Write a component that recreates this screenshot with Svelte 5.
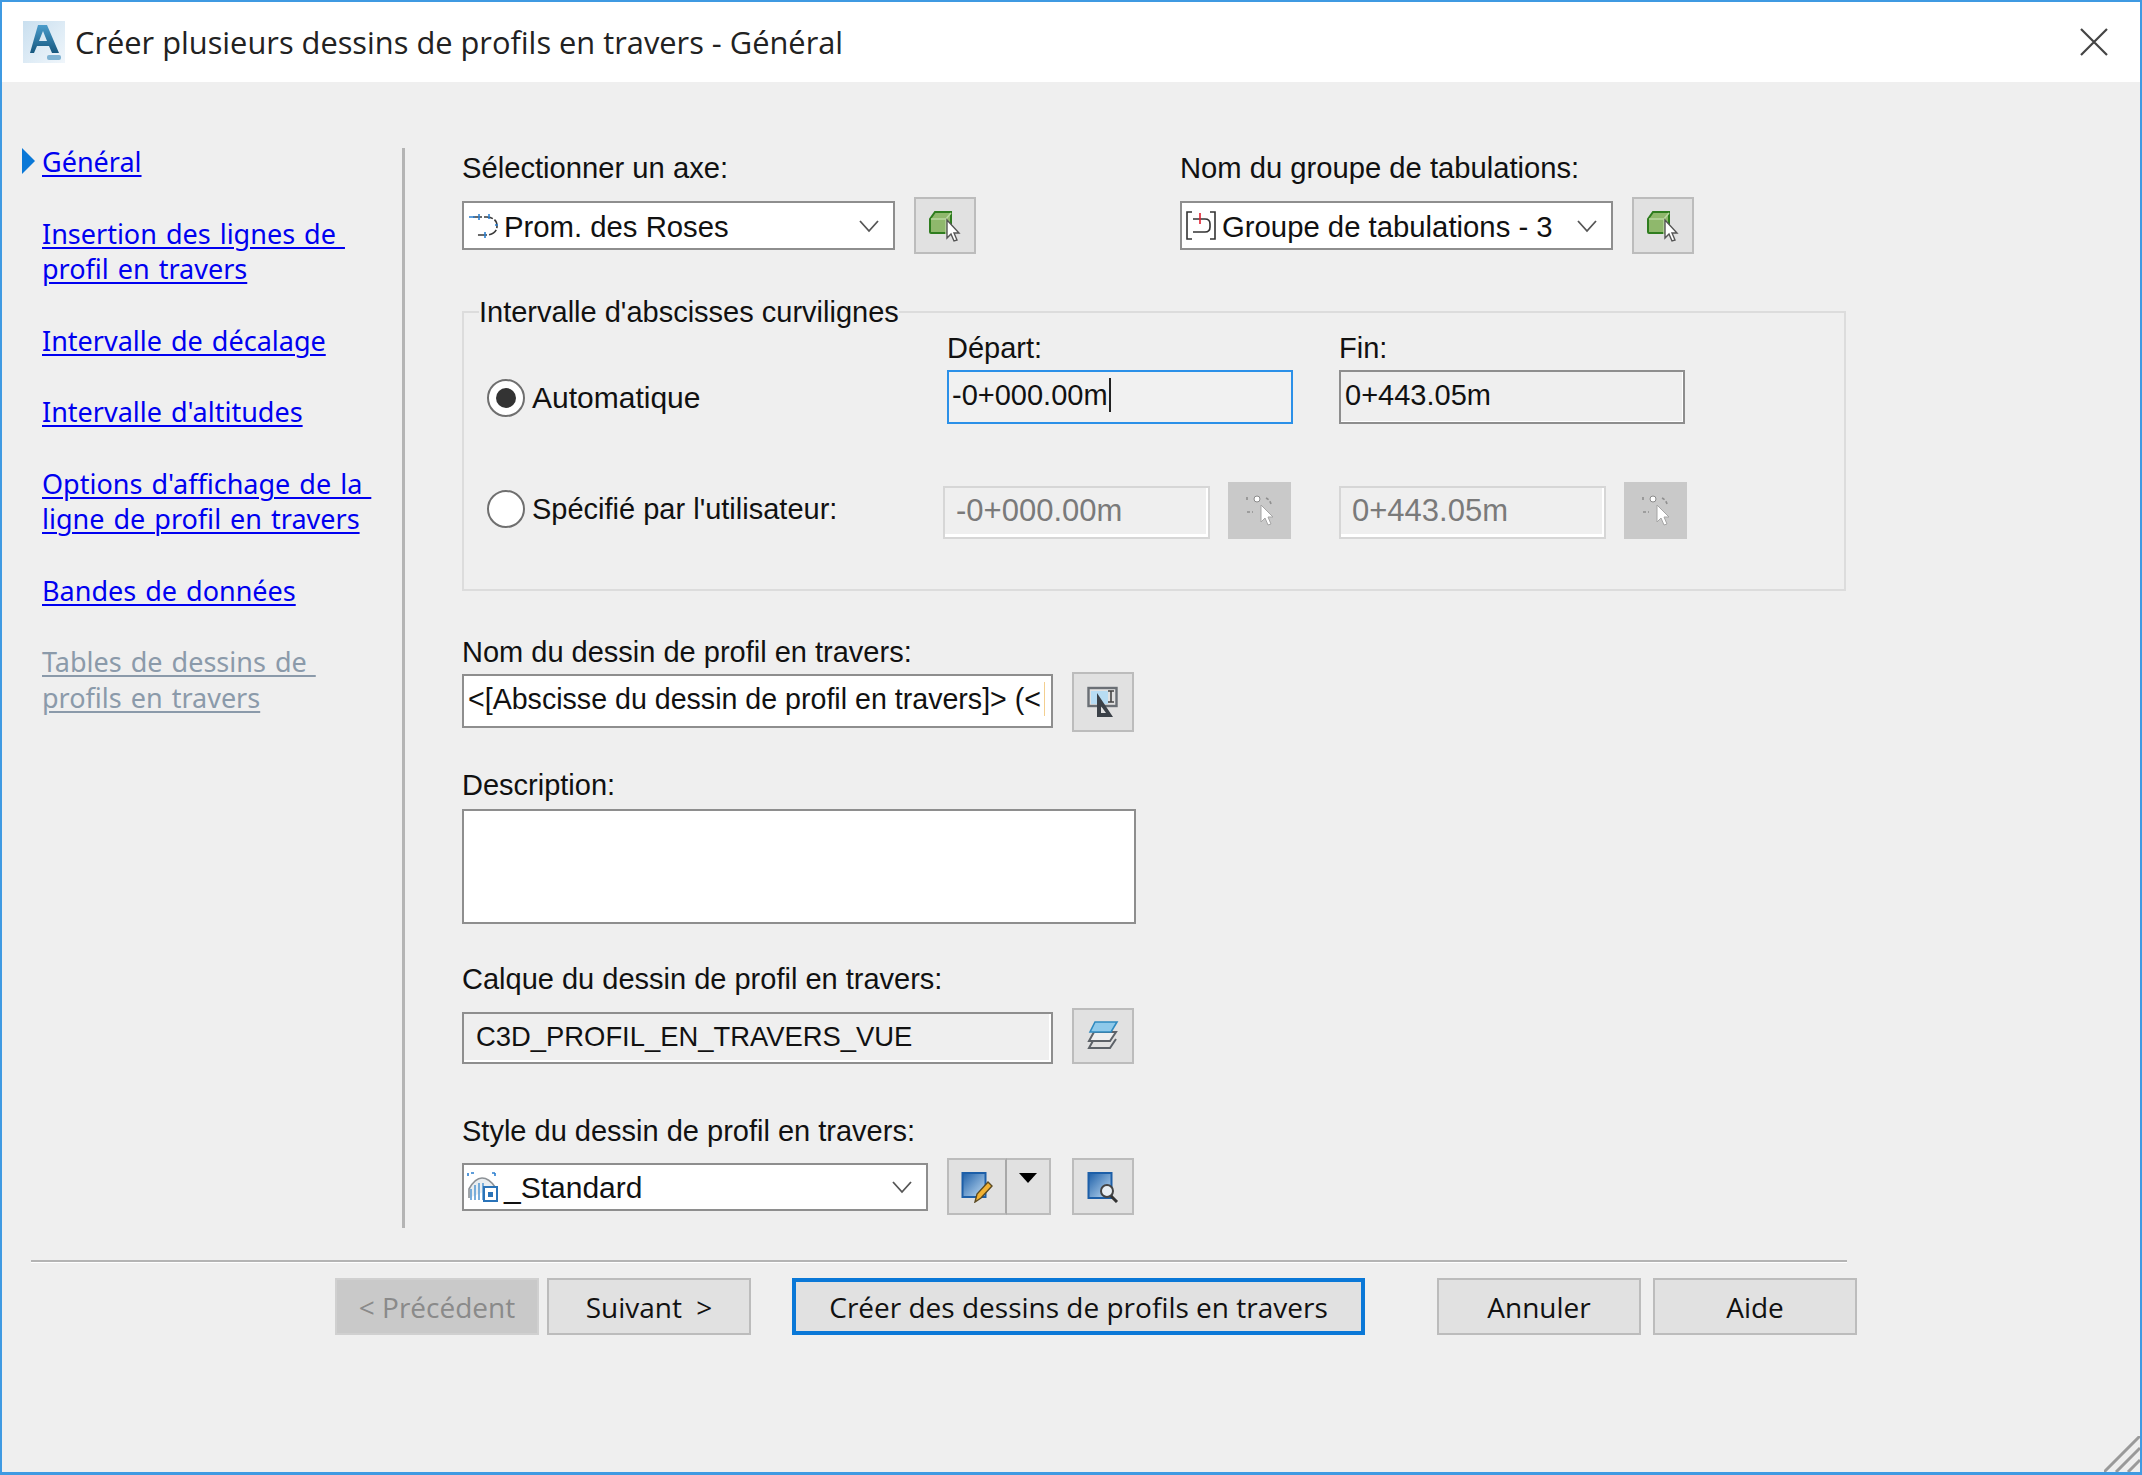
<script>
  const links = [
    { lines: ['Général'], active: true },
    { lines: ['Insertion des lignes de ', 'profil en travers'] },
    { lines: ['Intervalle de décalage'] },
    { lines: ["Intervalle d'altitudes"] },
    { lines: ["Options d'affichage de la ", 'ligne de profil en travers'] },
    { lines: ['Bandes de données'] },
    { lines: ['Tables de dessins de ', 'profils en travers'], disabled: true }
  ];
</script>

{#snippet chevron()}
  <svg class="chev" width="22" height="14" viewBox="0 0 22 14"><path d="M2 2l9 10 9-10" fill="none" stroke="#555" stroke-width="1.8"/></svg>
{/snippet}

{#snippet pick()}
  <svg width="32" height="32" viewBox="0 0 32 32">
    <path d="M1 9l5-7h16v21H2a1 1 0 0 1-1-1z" fill="#8fb86c" stroke="#2f7d1f" stroke-width="2"/>
    <path d="M2 9h15v15M17 9l5-6" fill="none" stroke="#b9d6a0" stroke-width="1.5"/>
    <path d="M18 10v18l4-4 3 7 3-1-3-7h5z" fill="#fff" stroke="#555" stroke-width="1.4"/>
  </svg>
{/snippet}

{#snippet pickOff()}
  <svg width="32" height="32" viewBox="0 0 32 32">
    <circle cx="13" cy="4" r="3" fill="#fff" stroke="#8a8a8a"/>
    <path d="M3 2v4M22 3q4 2 5 6M3 17h6" fill="none" stroke="#8f8f8f" stroke-width="1.6" stroke-dasharray="3 2"/>
    <path d="M17 10v17l4-4 3 7 3-1-3-7h5z" fill="#fff" stroke="#a5a5a5"/>
  </svg>
{/snippet}

<div class="window">
  <header class="titlebar">
    <svg class="logo" width="42" height="42" viewBox="0 0 42 42">
      <defs>
        <linearGradient id="lg" x1="0" y1="0" x2="1" y2="1"><stop offset="0" stop-color="#c9dfef"/><stop offset="1" stop-color="#f0f6fb"/></linearGradient>
        <linearGradient id="la" x1="0" y1="0" x2="0" y2="1"><stop offset="0" stop-color="#4a9ccb"/><stop offset="1" stop-color="#17587f"/></linearGradient>
      </defs>
      <rect width="42" height="42" fill="url(#lg)"/>
      <path d="M15 4h9l12 28h-7l-3-7H14l-3 7H7zM16 20h8l-4-10z" fill="url(#la)" fill-rule="evenodd"/>
      <rect x="24" y="34" width="14" height="5" rx="2" fill="#7fb3d3"/>
    </svg>
    <span class="title">Créer plusieurs dessins de profils en travers - Général</span>
    <svg class="close" width="30" height="30" viewBox="0 0 30 30"><path d="M2 2l26 26M28 2L2 28" stroke="#444" stroke-width="2.2"/></svg>
  </header>

  <div class="content">
    <nav class="sidebar">
      {#each links as link}
        <div class="link" class:disabled={link.disabled}>
          {#if link.active}<span class="marker"></span>{/if}
          {#each link.lines as line}<div class="line"><u>{line}</u></div>{/each}
        </div>
      {/each}
    </nav>

    <main class="main">
      <div class="toprow">
        <div class="topcol left">
          <div class="label">Sélectionner un axe:</div>
          <div class="row top">
            <div class="select w433">
              <svg class="sicon" width="32" height="26" viewBox="0 0 32 26"><path d="M6 4h14q10 1 10 9t-10 9H10" fill="none" stroke="#3a3a3a" stroke-width="1.6" stroke-dasharray="9 2"/><path d="M2 4h6M12 1v6M22 1v5M28 12h3M18 19v6" stroke="#2b7fd0" stroke-width="1.6"/></svg>
              <span class="stext">Prom. des Roses</span>
              {@render chevron()}
            </div>
            <button class="iconbtn pickbtn">{@render pick()}</button>
          </div>
        </div>
        <div class="topcol">
          <div class="label">Nom du groupe de tabulations:</div>
          <div class="row top">
            <div class="select w433">
              <svg class="sicon" width="32" height="32" viewBox="0 0 32 32"><path d="M7 2H2v27h5M25 2h5v27h-5" fill="none" stroke="#333" stroke-width="1.6"/><path d="M8 9h12q5 0 5 5v3q0 5-5 5H8" fill="none" stroke="#333" stroke-width="1.6"/><path d="M15 3v11" stroke="#e02030" stroke-width="1.6"/></svg>
              <span class="stext">Groupe de tabulations - 3</span>
              {@render chevron()}
            </div>
            <button class="iconbtn pickbtn b2">{@render pick()}</button>
          </div>
        </div>
      </div>

      <fieldset class="group">
        <legend>Intervalle d'abscisses curvilignes</legend>
        <div class="auto">
          <div class="radiowrap w460 first">
            <span class="radio on"></span><span>Automatique</span>
          </div>
          <div class="col">
            <div class="label small">Départ:</div>
            <div class="input focus"><span>-0+000.00m</span><span class="caret"></span></div>
          </div>
          <div class="col fin">
            <div class="label small">Fin:</div>
            <div class="input readonly"><span>0+443.05m</span></div>
          </div>
        </div>
        <div class="spec">
          <div class="radiowrap w456">
            <span class="radio"></span><span>Spécifié par l'utilisateur:</span>
          </div>
          <div class="input off">-0+000.00m</div>
          <button class="iconbtn offbtn">{@render pickOff()}</button>
          <div class="input off second">0+443.05m</div>
          <button class="iconbtn offbtn">{@render pickOff()}</button>
        </div>
      </fieldset>

      <div class="label m44">Nom du dessin de profil en travers:</div>
      <div class="row namerow">
        <div class="input name"><span>&lt;[Abscisse du dessin de profil en travers]&gt; (&lt;</span><span class="clipmark"></span></div>
        <button class="iconbtn namebtn">
          <svg width="32" height="32" viewBox="0 0 32 32">
            <rect x="1.5" y="2" width="28" height="18" fill="none" stroke="#6a6f75" stroke-width="2.4"/>
            <rect x="4" y="5" width="17" height="13" fill="#b7dcf3"/>
            <path d="M21 5h6M24 5v11M21 16h6" stroke="#444" stroke-width="1.6"/>
            <path d="M10 7l16 24H10z M14 20v7h5z" fill="#3b4148" fill-rule="evenodd"/>
          </svg>
        </button>
      </div>

      <div class="label m36">Description:</div>
      <div class="textarea"></div>

      <div class="label m38">Calque du dessin de profil en travers:</div>
      <div class="row layerrow">
        <div class="input layer">C3D_PROFIL_EN_TRAVERS_VUE</div>
        <button class="iconbtn layerbtn">
          <svg width="32" height="30" viewBox="0 0 32 30">
            <path d="M7 18L2 27h21l6-9" fill="none" stroke="#5d6268" stroke-width="2"/>
            <path d="M7 11L2 20h21l6-9z" fill="#efefef" stroke="#5d6268" stroke-width="2"/>
            <path d="M8 1L3 11h21l6-10z" fill="#8ec9ea" stroke="#2f8ac0" stroke-width="1.6"/>
          </svg>
        </button>
      </div>

      <div class="label m50">Style du dessin de profil en travers:</div>
      <div class="row stylerow">
        <div class="select w466">
          <svg class="sicon" width="32" height="30" viewBox="0 0 32 30">
            <path d="M1 1v3M4 1h3M25 1h3M28 1v3" stroke="#2b7fd0" stroke-width="1.6"/>
            <path d="M2 26V17Q8 6 15 6t13 9" fill="#e9edf0" stroke="#8c9196" stroke-width="1.6"/>
            <path d="M4 17v11M8 13v15M12 11v17M16 11v17" stroke="#5a9bd4" stroke-width="1.6"/>
            <rect x="17" y="15" width="13" height="14" fill="#fff" stroke="#2a73b8" stroke-width="2"/>
            <rect x="21" y="20" width="5" height="5" fill="#2a73b8"/>
          </svg>
          <span class="stext">_Standard</span>
          {@render chevron()}
        </div>
        <div class="split">
          <button class="part a">
            <svg width="32" height="32" viewBox="0 0 32 32">
              <defs><linearGradient id="doc" x1="0" y1="0" x2="1" y2="1"><stop offset="0" stop-color="#1d5fa8"/><stop offset="1" stop-color="#c4dff5"/></linearGradient></defs>
              <rect x="1.5" y="2" width="23" height="24" fill="url(#doc)" stroke="#1d5fa8" stroke-width="2"/>
              <path d="M14 31l2-8L27 11l4 4-11 12z" fill="#f2b233" stroke="#5b4a22" stroke-width="1.4"/>
            </svg>
          </button>
          <button class="part b"><span class="tri"></span></button>
        </div>
        <button class="iconbtn stylebtn">
          <svg width="32" height="32" viewBox="0 0 32 32">
            <defs><linearGradient id="doc2" x1="0" y1="0" x2="1" y2="1"><stop offset="0" stop-color="#1d5fa8"/><stop offset="1" stop-color="#c4dff5"/></linearGradient></defs>
            <rect x="1.5" y="2" width="23" height="25" fill="url(#doc2)" stroke="#1d5fa8" stroke-width="2"/>
            <circle cx="20" cy="20" r="6" fill="#e8eef3" stroke="#444" stroke-width="2"/>
            <path d="M24 25l6 6" stroke="#333" stroke-width="3"/>
          </svg>
        </button>
      </div>
    </main>
  </div>

  <div class="separator"></div>

  <footer class="footer">
    <button class="btn prev">&lt; Précédent</button>
    <button class="btn next">Suivant &gt;</button>
    <button class="btn create">Créer des dessins de profils en travers</button>
    <button class="btn cancel">Annuler</button>
    <button class="btn help">Aide</button>
  </footer>

  <svg class="grip" width="36" height="36" viewBox="0 0 36 36"><path d="M0 36L36 0M12 36L36 12M24 36L36 24" stroke="#9a9a9a" stroke-width="3"/></svg>
</div>

<style>
  :global(body) { margin: 0; background: #efefef; }
  .window {
    position: relative;
    box-sizing: border-box;
    width: 2142px;
    height: 1475px;
    border: 2px solid #3f9ae2;
    border-bottom-width: 3px;
    background: #efefef;
    font-family: "Liberation Sans", Arial, sans-serif;
    font-size: 29px;
    color: #111;
    overflow: hidden;
  }
  .titlebar {
    display: flex;
    align-items: center;
    height: 80px;
    background: #fff;
    padding: 0 31px 0 21px;
  }
  .logo { flex: none; }
  .title {
    margin-left: 10px;
    font-family: "Open Sans", sans-serif;
    font-size: 30.8px;
    color: #222;
    flex: 1;
  }
  .close { flex: none; }

  .content { display: flex; padding-top: 66px; }
  .sidebar {
    box-sizing: border-box;
    width: 403px;
    border-right: 3px solid #b4b4b4;
    display: flex;
    flex-direction: column;
    gap: 36px;
    padding-left: 40px;
    font-family: "Noto Sans", sans-serif;
    font-size: 27px;
    word-spacing: 2px;
    line-height: 35.5px;
    color: #0000f0;
  }
  .link { position: relative; }
  .link:first-child { margin-top: -4px; }
  .line { white-space: pre; }
  .link.disabled { color: #8b9aaa; }
  .line u { text-underline-offset: 3px; text-decoration-thickness: 2px; }
  .marker {
    position: absolute;
    left: -20px;
    top: 4px;
    border-left: 13px solid #0a78d7;
    border-top: 13px solid transparent;
    border-bottom: 13px solid transparent;
  }
  .main { margin-left: 57px; padding-top: 2px; padding-bottom: 13px; width: 1400px; }

  .label { line-height: 34px; height: 34px; white-space: nowrap; }
  .row { display: flex; align-items: center; }
  .toprow { display: flex; }
  .toprow .label { font-size: 29.2px; padding-top: 1px; margin-bottom: -1px; }
  .topcol.left { width: 718px; }
  .row.top { margin-top: 13px; height: 57px; }

  .select {
    box-sizing: border-box;
    display: flex;
    align-items: center;
    height: 49px;
    background: #fff;
    border: 2px solid #8e8e8e;
    padding: 0 13px 0 3px;
  }
  .w433 { width: 433px; }
  .w466 { width: 466px; }
  .sicon { flex: none; }
  .stext { flex: 1; margin-left: 5px; white-space: nowrap; font-size: 29.3px; padding-top: 2px; }
  .chev { flex: none; }

  .iconbtn {
    box-sizing: border-box;
    display: flex;
    align-items: center;
    justify-content: center;
    width: 62px;
    height: 57px;
    padding: 0;
    background: #e1e1e1;
    border: 2px solid #bcbcbc;
  }
  .pickbtn { margin-left: 19px; }
  .pickbtn.b2 { margin-left: 19px; }

  .group {
    box-sizing: border-box;
    margin: 41px 0 0;
    padding: 0 0 0 23px;
    width: 1384px;
    height: 296px;
    border: 2px solid #dcdcdc;
    min-width: 0;
  }
  legend { padding: 0; margin-left: -8px; line-height: 34px; white-space: nowrap; font-size: 29px; }
  .auto { display: flex; align-items: flex-end; }
  .col { width: 346px; }
  .col.fin { margin-left: 46px; }
  .label.small { height: 36px; line-height: 38px; margin-bottom: 5px; }
  .radiowrap { display: flex; align-items: center; gap: 7px; height: 54px; white-space: nowrap; flex: none; box-sizing: border-box; }
  .radiowrap.first { padding-top: 2px; font-size: 30px; }
  .w460 { width: 460px; }
  .w456 { width: 456px; }
  .radio {
    box-sizing: border-box;
    flex: none;
    width: 38px;
    height: 38px;
    border-radius: 50%;
    background: #fff;
    border: 2px solid #6f6f6f;
    display: flex;
    align-items: center;
    justify-content: center;
  }
  .radio.on::after {
    content: "";
    width: 20px;
    height: 20px;
    border-radius: 50%;
    background: #333;
  }
  .spec { display: flex; align-items: flex-end; margin-top: 58px; }
  .spec .radiowrap { height: 57px; padding-bottom: 3px; }

  .input {
    box-sizing: border-box;
    display: flex;
    align-items: center;
    height: 54px;
    border: 2px solid #8e8e8e;
    padding: 0 4px 4px;
    white-space: nowrap;
    overflow: hidden;
  }
  .input.focus { border-color: #2b90e8; background: #f1f1f1; padding-left: 3px; }
  .input.readonly { background: #efefef; padding-left: 4px; box-shadow: inset -1px -1px 0 #fff; }
  .caret { width: 2px; height: 34px; background: #222; margin-left: 1px; flex: none; }
  .input.off {
    width: 267px;
    height: 53px;
    font-size: 31px;
    color: #7a7a7a;
    border-color: #d6d6d6;
    box-shadow: inset -2px -3px 0 #fff;
    padding: 0 0 3px 11px;
    flex: none;
  }
  .offbtn { width: 63px; margin-left: 18px; background: #c9c9c9; border-color: #c9c9c9; flex: none; }
  .second { margin-left: 48px; }

  .m44 { margin-top: 44px; }
  .m36 { margin-top: 36px; }
  .m38 { margin-top: 38px; }
  .m50 { margin-top: 50px; }
  .namerow { margin-top: 3px; height: 60px; align-items: flex-start; }
  .input.name { width: 591px; height: 54px; background: #fff; margin-top: 2px; padding-left: 4px; flex: none; font-size: 28.6px; }
  .clipmark { width: 1px; height: 34px; margin-left: 3px; background: #f3cf90; flex: none; }
  .namebtn { width: 62px; height: 60px; margin-left: 19px; }
  .textarea {
    box-sizing: border-box;
    margin-top: 7px;
    width: 674px;
    height: 115px;
    background: #fff;
    border: 2px solid #8e8e8e;
  }
  .layerrow { margin-top: 12px; height: 56px; align-items: flex-end; }
  .input.layer {
    width: 591px;
    height: 52px;
    background: #efefef;
    font-size: 27.4px;
    padding: 0 0 2px 12px;
    box-shadow: inset -2px -2px 0 #fff;
    flex: none;
  }
  .layerbtn { height: 56px; margin-left: 19px; }
  .stylerow { margin-top: 10px; height: 57px; }
  .stylerow .select { height: 48px; }
  .stylerow .stext { font-size: 30px; }
  .split { display: flex; margin-left: 19px; height: 57px; }
  .part {
    box-sizing: border-box;
    background: #e1e1e1;
    border: 2px solid #bcbcbc;
    padding: 0;
    display: flex;
    align-items: center;
    justify-content: center;
    height: 57px;
  }
  .part.a { width: 60px; border-right: 2px solid #a8a8a8; }
  .part.b { width: 44px; border-left: none; align-items: flex-start; padding-top: 13px; }
  .tri { border-top: 10px solid #000; border-left: 9px solid transparent; border-right: 9px solid transparent; }
  .stylebtn { margin-left: 21px; }

  .separator {
    margin: 32px 0 0 29px;
    width: 1816px;
    height: 2px;
    background: #b4b4b4;
    border-bottom: 1px solid #fff;
  }
  .footer { display: flex; margin: 15px 0 0 333px; }
  .btn {
    box-sizing: border-box;
    height: 57px;
    width: 204px;
    background: #e1e1e1;
    border: 2px solid #bcbcbc;
    padding: 0;
    font-family: "Open Sans", sans-serif;
    font-size: 28px;
    color: #111;
    white-space: nowrap;
  }
  .btn.prev { background: #c9c9c9; border-color: #d0d0d0; color: #8a8a8a; }
  .btn.next { margin-left: 8px; word-spacing: 7px; }
  .btn.create { width: 573px; margin-left: 41px; border: 4px solid #0a78d7; }
  .btn.cancel { margin-left: 72px; }
  .btn.help { margin-left: 12px; }
  .grip { position: absolute; right: 0; bottom: 0; }
</style>
